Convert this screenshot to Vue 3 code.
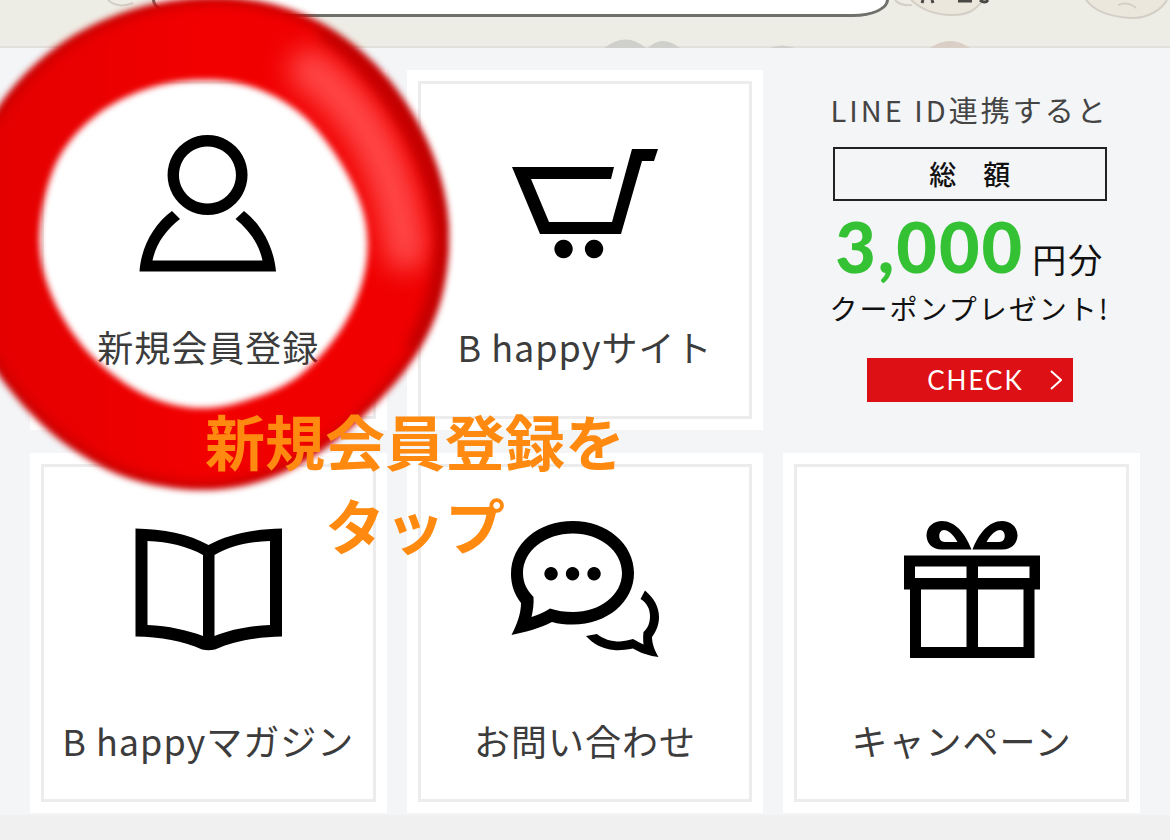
<script setup>
const smooth = (pts) => {
  const n = pts.length
  let d = `M${pts[0]}`
  for (let i = 0; i < n; i++) {
    const a = pts[(i - 1 + n) % n]
    const b = pts[i]
    const c = pts[(i + 1) % n]
    const e = pts[(i + 2) % n]
    d += ` C${b[0] + (c[0] - a[0]) / 6},${b[1] + (c[1] - a[1]) / 6}`
    d += ` ${c[0] - (e[0] - b[0]) / 6},${c[1] - (e[1] - b[1]) / 6} ${c}`
  }
  return d + 'Z'
}

const outer = smooth([
  [205, -3], [268, 3], [325, 25], [375, 64], [413, 114], [439, 172], [449, 232],
  [442, 296], [418, 352], [376, 404], [320, 452], [262, 481], [198, 490], [128, 478],
  [68, 446], [20, 402], [-16, 350], [-36, 285], [-38, 215], [-22, 145], [14, 86], [68, 39], [134, 9]
])
const inner = smooth([
  [205, 80], [255, 88], [302, 115], [340, 162], [364, 216], [365, 270],
  [343, 326], [300, 375], [250, 399], [200, 408], [148, 396], [98, 362], [62, 316],
  [42, 264], [42, 212], [60, 156], [98, 114], [150, 88]
])
const ring = outer + inner

const cards = [
  { id: 'join', label: '新規会員登録', box: '128 120 160 160' },
  { id: 'shop', label: 'B happyサイト', box: '505 120 160 160' },
  { id: 'promo' },
  { id: 'magazine', label: 'B happyマガジン', box: '128 503 160 160', low: true },
  { id: 'contact', label: 'お問い合わせ', box: '505 503 160 160', low: true },
  { id: 'campaign', label: 'キャンペーン', box: '882 503 160 160', low: true }
]

const icons = {
  join: 'M207.500 135a40 40 0 1 0 .1 0ZM207.500 146.500a28.500 28.500 0 1 1-.1 0ZM139.500 271.500C141 248 153 225 172 211L180 219C165 231 156 244 152.500 260.500H262.500C259 244 250 231 235.500 219L244 211C262 225 274 248 276 271.500Z',
  shop: 'M512 167H614L611 179H531L549 222H612L632 149H658L654 161H642L621 234H540ZM563.500 239.800a9.200 9.200 0 1 0 .1 0ZM594 239.800a9.200 9.200 0 1 0 .1 0Z',
  magazine: 'M135.500 528.500C163 529 189 534 208.500 545C228 534 254 529 282 528.500V636.500C257 637 233 641 215 649.500Q208.500 651 202 649.500C184 641 160 637 135.500 636.500ZM147.500 541V625C169 626 187 630 203 636V555C187 546 169 542 147.500 541ZM270 541C248 542 230 546 214.500 555V636C230 630 248 626 270 625Z',
  contact: 'M511.500 635C517 624 521 614 521 603C514 594 511 584 511 574C511 544 538 521 573 521C607 521 634 544 634 573C634 602 607 624.500 573 624.500C565 624.500 558 624 552 622C540 628 526 632 511.500 635ZM531.500 617C538 615 545 612 550 608.500C557 611 565 612 573 612C600 612 622 595 622 573C622 551 600 533.500 573 533.500C545 533.500 523 551 523 573C523 583 527 590 533.500 597C534 604 533 610 531.500 617ZM551 567a6.700 6.700 0 1 0 .1 0ZM572.500 567a6.700 6.700 0 1 0 .1 0ZM594 567a6.700 6.700 0 1 0 .1 0ZM645 590.500C654 598 659 607 659 617C659 624 657 630 652 637C652 644 655 651 658.500 657C650 656 640 653 633 648.500C625 650 619 650.500 614 650C603 649 593 644 586 636L597 634C603 639 611 641.500 620 641.500C625 641 629 640 633 639C637 641 640 643 643.500 644.500C643 640 643 636 643.500 632C648 628 650 623 650 616C650 609 647 603 640.500 599Z',
  campaign: 'M904 555.500H1040V589.500H1034.500V658H910V589.500H904ZM915 566.500V578H966.500V566.500ZM978 566.500V578H1029.500V566.500ZM921 589.500V647H966.500V589.500ZM978 589.500V647H1023.500V589.500ZM971.500 549.500H942C931 549.500 926.500 542 926.500 535C927 526 934 521 942 521C955 521 965 533 971.500 549.500ZM957.500 542C953 534 948 530 944 530C938 530 937 542 945 542ZM972.500 549.500H1002C1013 549.500 1017.500 542 1017.500 535C1017 526 1010 521 1002 521C989 521 979 533 972.500 549.500ZM986.500 542C991 534 996 530 1000 530C1006 530 1007 542 999 542Z'
}
</script>

<template>
  <div class="page">
    <header class="top">
      <svg class="doodles" viewBox="0 0 1170 48" preserveAspectRatio="xMidYMin slice" aria-hidden="true">
        <g fill="#ece7dc" stroke="#d3cfc7" stroke-width="2">
          <path d="M895 0q5 6 17 5M911 0C922 10 936 15 952 15S976 10 983 0" />
          <path d="M1086 0C1096 13 1112 17 1130 18S1162 9 1167 0" />
          <path d="M1118 5q10-4 18 3" fill="none" />
          <path d="M108 0q10 9 25 3" fill="none" />
        </g>
        <path d="M930 48q20-14 40 0Z" fill="#d9cfc6" />
        <path d="M604 48q22-17 42 0ZM648 48q14-14 32 0ZM770 48q12-5 25 0Z" fill="#cfcfcc" />
        <path d="M923 0l-1 3M932 0l1 3M958 1h14M980 0q5 4 8 0" fill="none" stroke="#4a4845" stroke-width="3" />
      </svg>
      <div class="bubble"></div>
    </header>

    <main class="menu">
      <template v-for="card in cards" :key="card.id">
        <section v-if="card.id === 'promo'" class="promo">
          <p class="lead">LINE ID連携すると</p>
          <p class="total">総　額</p>
          <p class="price"><strong>3,000</strong>円分</p>
          <p class="coupon">クーポンプレゼント!</p>
          <a class="check" href="#check">
            <span>CHECK</span>
            <svg viewBox="0 0 12 20" aria-hidden="true"><path d="M1 1l10 9-10 9" /></svg>
          </a>
        </section>
        <a v-else class="card" :class="{ low: card.low }" :href="'#' + card.id">
          <span class="frame">
            <svg class="icon" :viewBox="card.box" aria-hidden="true">
              <path :d="icons[card.id]" fill-rule="evenodd" />
            </svg>
            <span class="label">{{ card.label }}</span>
          </span>
        </a>
      </template>
    </main>

    <svg class="ring" viewBox="0 0 470 510" aria-hidden="true">
      <defs>
        <linearGradient id="paint" x1="0" x2="1" y1="0" y2="0">
          <stop offset="0" stop-color="#e20000" />
          <stop offset=".5" stop-color="#f20000" />
          <stop offset="1" stop-color="#f00000" />
        </linearGradient>
        <clipPath id="band"><path :d="ring" clip-rule="evenodd" /></clipPath>
        <filter id="edge" filterUnits="userSpaceOnUse" x="-60" y="-30" width="560" height="560" color-interpolation-filters="sRGB">
          <feGaussianBlur stdDeviation="3" />
        </filter>
        <filter id="rim" filterUnits="userSpaceOnUse" x="-60" y="-30" width="560" height="560" color-interpolation-filters="sRGB">
          <feGaussianBlur stdDeviation="5" />
        </filter>
        <filter id="glow" filterUnits="userSpaceOnUse" x="-60" y="-60" width="600" height="600" color-interpolation-filters="sRGB">
          <feGaussianBlur stdDeviation="13" />
        </filter>
      </defs>
      <g filter="url(#edge)">
        <g clip-path="url(#band)">
          <path :d="ring" fill="url(#paint)" fill-rule="evenodd" />
          <path d="M310 70C358 104 394 160 406 250" fill="none" stroke="#ff4848" stroke-width="42" stroke-linecap="round" filter="url(#glow)" />
          <path :d="outer" fill="none" stroke="#c40000" stroke-width="14" filter="url(#rim)" />
          <path d="M325 25C375 58 436 134 449 232C448 280 438 318 418 352" fill="none" stroke="#c40000" stroke-width="28" filter="url(#rim)" />
        </g>
      </g>
    </svg>
    <p class="caption">新規会員登録を<br />タップ</p>
  </div>
</template>

<style>
body {
  margin: 0;
  background: #f0f0f0;
}
</style>

<style scoped>
.page {
  position: relative;
  overflow: hidden;
  min-height: 100vh;
  color: #3c3c3c;
  font-family: "Noto Sans CJK JP", "Noto Sans", sans-serif;
}
p {
  margin: 0;
}
.top {
  position: relative;
  box-sizing: border-box;
  height: 48px;
  border-bottom: 2px solid #e2e0db;
  background: #eeede5;
}
.doodles {
  position: absolute;
  inset: 0;
  width: 100%;
  height: 48px;
}
.bubble {
  position: relative;
  box-sizing: border-box;
  width: 63%;
  height: 17px;
  margin-left: 13%;
  border: 3px solid #6f6f6b;
  border-top: 0;
  border-radius: 0 0 36px 36px / 0 0 17px 17px;
  background: #fff;
}
.menu {
  display: grid;
  grid-template-columns: repeat(3, 1fr);
  gap: 23px 20px;
  padding: 22px 30px 2px;
  background: #f3f5f7;
}
.card {
  box-sizing: border-box;
  min-height: 360px;
  display: flex;
  padding: 11px;
  background: #fff;
  color: inherit;
  text-decoration: none;
}
.frame {
  flex: 1;
  display: flex;
  flex-direction: column;
  align-items: center;
  gap: 39px;
  padding-top: 36px;
  border: 3px solid #ececec;
}
.low .frame {
  gap: 50px;
}
.icon {
  width: 160px;
  height: 160px;
}
.label {
  font-size: 36px;
  line-height: 54px;
  letter-spacing: 1px;
  white-space: nowrap;
}
.promo {
  display: flex;
  flex-direction: column;
  align-items: center;
  padding: 18px 0 0 16px;
  color: #111;
  white-space: nowrap;
}
.lead {
  color: #444;
  font-size: 29px;
  line-height: 42px;
  letter-spacing: 3px;
}
.total {
  box-sizing: border-box;
  width: 274px;
  margin-top: 17px;
  border: 2px solid #222;
  font-size: 27px;
  font-weight: 500;
  line-height: 50px;
  text-align: center;
}
.price {
  display: flex;
  align-items: baseline;
  margin-top: 13px;
  font-size: 34px;
  line-height: 64px;
  letter-spacing: 2px;
}
.price strong {
  margin-right: 8px;
  color: #34c134;
  font: 900 70px/64px Lato, sans-serif;
}
.coupon {
  font-size: 28px;
  line-height: 34px;
  letter-spacing: 2px;
}
.check {
  box-sizing: border-box;
  display: flex;
  align-items: center;
  justify-content: flex-end;
  gap: 26px;
  width: 206px;
  height: 44px;
  margin-top: 33px;
  padding-right: 11px;
  background: #dc1015;
  color: #fff;
  font: 400 26px/44px Lato, sans-serif;
  letter-spacing: 2px;
  text-decoration: none;
}
.check svg {
  width: 12px;
  height: 20px;
  fill: none;
  stroke: #fff;
  stroke-width: 2;
}
.ring {
  position: absolute;
  top: 0;
  left: 0;
  width: 470px;
  height: 510px;
  pointer-events: none;
}
.caption {
  position: absolute;
  top: 398px;
  left: 205px;
  color: #ff8a0f;
  font-size: 60px;
  font-weight: 700;
  line-height: 84px;
  text-align: center;
  white-space: nowrap;
  pointer-events: none;
}
</style>
